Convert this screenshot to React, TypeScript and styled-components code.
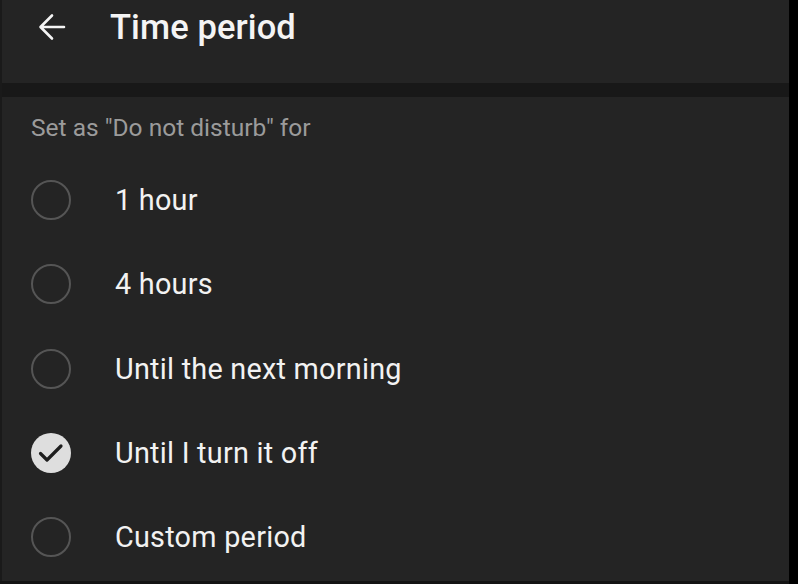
import styled, { createGlobalStyle } from "styled-components";

const GlobalStyle = createGlobalStyle`
  html, body {
    margin: 0;
    padding: 0;
    background: #000;
  }
  body {
    font-family: Roboto, "Noto Sans", sans-serif;
    -webkit-font-smoothing: antialiased;
  }
`;

const Screen = styled.div`
  width: 789px;
  height: 584px;
  background: #141414;
  overflow: hidden;
`;

const Panel = styled.div`
  height: 581px;
  background: #242424;
  border-left: 2px solid #1a1a1a;
  display: flex;
  flex-direction: column;
`;

const Header = styled.header`
  height: 83px;
  box-sizing: border-box;
  padding: 0 0 29px 36px;
  display: flex;
  align-items: center;
  gap: 44px;
  color: #f4f4f4;
`;

const BackButton = styled.button`
  background: none;
  border: none;
  padding: 0;
  width: 28px;
  height: 28px;
  display: flex;
  color: inherit;
  cursor: pointer;
`;

const Title = styled.h1`
  margin: 0;
  font-size: 34.5px;
  font-weight: 500;
  letter-spacing: 0.1px;
`;

const Divider = styled.div`
  height: 14px;
  background: #181818;
`;

const Content = styled.section`
  padding: 17px 0 0 29px;
`;

const Caption = styled.p`
  margin: 0 0 16px;
  height: 28px;
  line-height: 28px;
  font-size: 24.5px;
  color: #9b9b9b;
`;

const Option = styled.label`
  height: 84.3px;
  display: flex;
  align-items: center;
  gap: 44px;
  cursor: pointer;
`;

const Radio = styled.span<{ $checked: boolean }>`
  width: 40px;
  height: 40px;
  box-sizing: border-box;
  border-radius: 50%;
  flex-shrink: 0;
  display: flex;
  align-items: center;
  justify-content: center;
  border: ${(p) => (p.$checked ? "none" : "2.8px solid #555")};
  background: ${(p) => (p.$checked ? "#dedede" : "transparent")};
`;

const OptionText = styled.span`
  font-size: 28.8px;
  letter-spacing: 0.25px;
  color: #f2f2f2;
`;

const options = [
  "1 hour",
  "4 hours",
  "Until the next morning",
  "Until I turn it off",
  "Custom period",
];

const selected = "Until I turn it off";

export default function App() {
  return (
    <>
      <GlobalStyle />
      <Screen>
        <Panel>
          <Header>
            <BackButton aria-label="Back">
              <svg width="28" height="28" viewBox="0 0 28 28" fill="none">
                <path
                  d="M26 14H3M14 2.5L2.5 14L14 25.5"
                  stroke="currentColor"
                  strokeWidth="2.6"
                  strokeLinecap="round"
                  strokeLinejoin="round"
                />
              </svg>
            </BackButton>
            <Title>Time period</Title>
          </Header>
          <Divider />
          <Content>
            <Caption>Set as "Do not disturb" for</Caption>
            {options.map((o) => (
              <Option key={o}>
                <Radio $checked={o === selected}>
                  {o === selected && (
                    <svg width="28" height="28" viewBox="0 0 28 28" fill="none">
                      <path
                        d="M3.5 14.5L10 21L24 7"
                        stroke="#1e1e1e"
                        strokeWidth="3.2"
                        strokeLinecap="round"
                        strokeLinejoin="round"
                      />
                    </svg>
                  )}
                </Radio>
                <OptionText>{o}</OptionText>
              </Option>
            ))}
          </Content>
        </Panel>
      </Screen>
    </>
  );
}
